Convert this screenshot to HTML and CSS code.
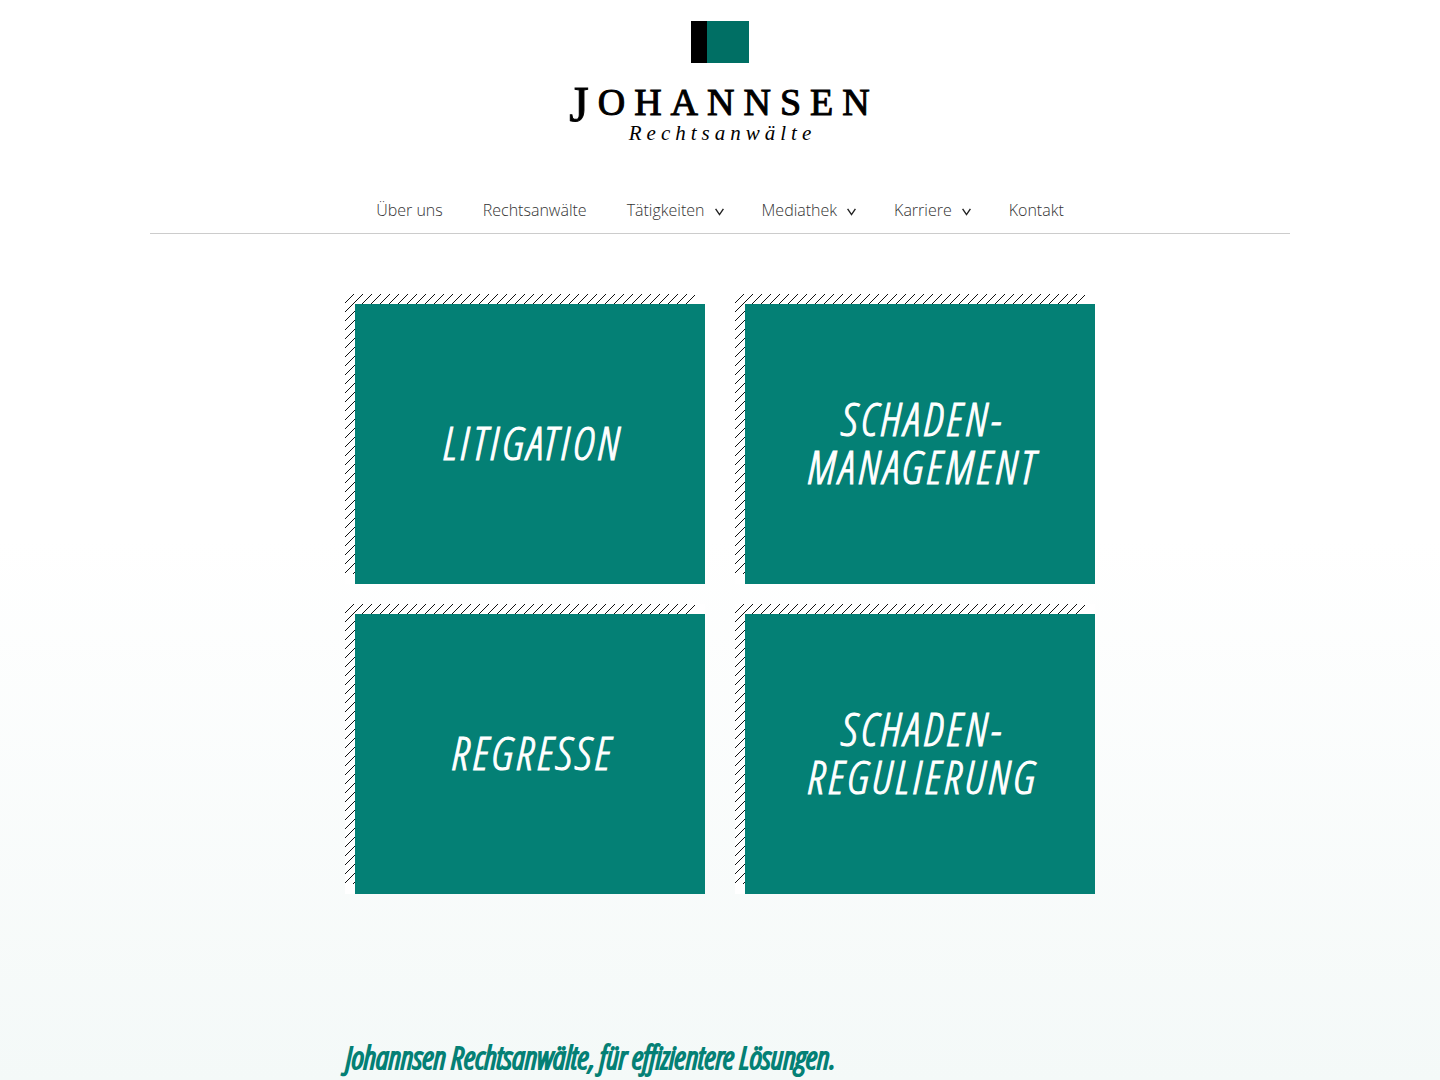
FILE: index.html
```html
<!DOCTYPE html>
<html lang="de">
<head>
<meta charset="utf-8">
<meta name="viewport" content="width=device-width, initial-scale=1">
<title>Johannsen Rechtsanwälte</title>
<link rel="stylesheet" href="styles.css">
</head>
<body>
<header class="header">
  <a class="logo" href="#">
    <svg class="logo-mark" width="60" height="42" viewBox="0 0 60 42" aria-hidden="true">
      <rect x="1" width="16" height="42" fill="#000"/>
      <rect x="17" width="42" height="42" fill="#006f64"/>
    </svg>
    <span class="logo-name"><span class="logo-initial">J</span>OHANNSEN</span>
    <span class="logo-sub">Rechtsanwälte</span>
  </a>
  <nav class="nav" aria-label="Hauptmenü">
    <a class="nav-link" href="#">Über uns</a>
    <a class="nav-link" href="#">Rechtsanwälte</a>
    <a class="nav-link has-menu" href="#">Tätigkeiten<svg class="chevron" width="9" height="8" viewBox="0 0 9 8" aria-hidden="true"><path d="M.6 .8 4.5 6.6 8.4 .8"/></svg></a>
    <a class="nav-link has-menu" href="#">Mediathek<svg class="chevron" width="9" height="8" viewBox="0 0 9 8" aria-hidden="true"><path d="M.6 .8 4.5 6.6 8.4 .8"/></svg></a>
    <a class="nav-link has-menu" href="#">Karriere<svg class="chevron" width="9" height="8" viewBox="0 0 9 8" aria-hidden="true"><path d="M.6 .8 4.5 6.6 8.4 .8"/></svg></a>
    <a class="nav-link" href="#">Kontakt</a>
  </nav>
</header>
<main class="main">
  <div class="tiles">
    <a class="tile" href="#"><span class="tile-face">LITIGATION</span></a>
    <a class="tile" href="#"><span class="tile-face">SCHADEN-<br>MANAGEMENT</span></a>
    <a class="tile" href="#"><span class="tile-face">REGRESSE</span></a>
    <a class="tile" href="#"><span class="tile-face">SCHADEN-<br>REGULIERUNG</span></a>
  </div>
  <h1 class="headline">Johannsen Rechtsanwälte, für effizientere Lösungen.</h1>
</main>
</body>
</html>
```
FILE: styles.css
```css
* { box-sizing: border-box; }

body {
  margin: 0;
  min-height: 100vh;
  background: linear-gradient(#fff 50%, #f4f9f8) no-repeat;
  color: #333;
  font: 300 16px/24px "Open Sans", sans-serif;
}

a { color: inherit; text-decoration: none; }

.header {
  max-width: 1140px;
  margin: 0 auto;
  padding-top: 21px;
  border-bottom: 1px solid #ccc;
}

.logo {
  display: flex;
  flex-direction: column;
  align-items: center;
  color: #000;
  font-family: "Liberation Serif", serif;
  white-space: nowrap;
}

.logo-mark { display: block; }

.logo-name {
  margin-top: 17px;
  padding-left: 8px;
  font-size: 38px;
  font-weight: 400;
  line-height: 44px;
  letter-spacing: 9px;
  -webkit-text-stroke: 1px #000;
}

.logo-initial {
  font-size: 50px;
  line-height: 24px;
  vertical-align: -6px;
}

.logo-sub {
  padding-left: 5px;
  font-size: 21px;
  font-style: italic;
  font-weight: 400;
  line-height: 18px;
  letter-spacing: 5px;
}

.nav {
  display: flex;
  flex-wrap: wrap;
  justify-content: center;
  margin-top: 54px;
  padding-bottom: 7px;
}

.nav-link { padding: 2px 20px 4px; }
.nav-link.has-menu { padding-right: 18px; }

.chevron {
  margin-left: 10px;
  fill: none;
  stroke: #222;
  stroke-width: 1.4;
}

.main {
  max-width: 750px;
  margin: 0 auto;
  padding-top: 60px;
}

.tiles {
  display: grid;
  grid-template-columns: 1fr 1fr;
  gap: 20px 30px;
}

.tile {
  display: flex;
  padding: 10px 0 0 10px;
  background:
    linear-gradient(#fff, #fff) right / 10px 100% no-repeat,
    linear-gradient(#fff, #fff) bottom / 100% 10px no-repeat,
    url("data:image/svg+xml,%3Csvg xmlns='http://www.w3.org/2000/svg' width='9' height='9'%3E%3Cpath fill='%23111' d='M0 8h1v1H0zM1 7h1v1H1zM2 6h1v1H2zM3 5h1v1H3zM4 4h1v1H4zM5 3h1v1H5zM6 2h1v1H6zM7 1h1v1H7zM8 0h1v1H8z'/%3E%3C/svg%3E") 0 0 / 9px 9px,
    #fff;
}

.tile-face {
  display: flex;
  flex: 1;
  align-items: center;
  justify-content: center;
  min-height: 280px;
  padding: 0 0 4px 4px;
  background: #048075;
  color: #fff;
  font: italic 300 46px/48px "Open Sans Condensed Light", "Open Sans Condensed", "Liberation Sans Narrow", sans-serif;
  letter-spacing: 3px;
  text-align: center;
  -webkit-text-stroke: 1px #fff;
}

.headline {
  margin: 143px 0 0;
  color: #048075;
  font: italic 300 32px/40px "Open Sans Condensed Light", "Open Sans Condensed", "Liberation Sans Narrow", sans-serif;
  -webkit-text-stroke: 2px #048075;
}
```
